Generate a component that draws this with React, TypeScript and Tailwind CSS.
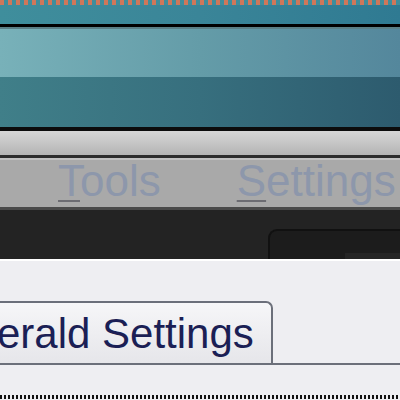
import React from 'react';

const font = { fontFamily: '"Liberation Sans", Arial, sans-serif' };

function MenuItem({ first, rest }: { first: string; rest: string }) {
  return (
    <span className="text-[44px] leading-[40px] text-[#8d97ab]">
      <span className="underline decoration-[#6c6c72] decoration-2 underline-offset-[4px]">{first}</span>
      {rest}
    </span>
  );
}

export default function App() {
  return (
    <div className="w-[400px] h-[400px] overflow-hidden flex flex-col bg-[#eeeef2]" style={font}>
      {/* title strip */}
      <div className="h-[5px] bg-[#3f8e9c] bg-[repeating-linear-gradient(90deg,#d0775a_0px,#d0775a_4px,transparent_4px,transparent_8px)]" />
      <div className="h-[19px] bg-gradient-to-r from-[#3f8e9c] via-[#3a8598] to-[#2f7a92]" />
      <div className="h-[3px] bg-black" />
      <div className="h-[2px] bg-[#5a7f86]" />
      <div className="h-[48px] bg-gradient-to-r from-[#78b1b9] via-[#649ca8] to-[#54879c]" />
      <div className="h-[50px] bg-gradient-to-r from-[#407f89] via-[#376f7e] to-[#2d5b6e]" />
      <div className="h-[4px] bg-[#0c0c0c]" />

      {/* toolbar chrome */}
      <div className="h-[24px] bg-gradient-to-b from-[#d6d6d6] via-[#c6c6c6] to-[#b4b4b4]" />
      <div className="h-[3px] bg-[#2c2c2c]" />
      <div className="h-[2px] bg-[#c0c0c0]" />

      {/* menu bar */}
      <div className="h-[47px] bg-[#a9a9a9] flex items-start pt-[1px] pl-[58px] gap-[76px] whitespace-nowrap">
        <MenuItem first="T" rest="ools" />
        <MenuItem first="S" rest="ettings" />
      </div>
      <div className="h-[3px] bg-[#4a4a4a]" />

      {/* dark area */}
      <div className="h-[49px] bg-[#232323] flex items-end pl-[268px]">
        <div className="flex-1 h-[30px] bg-[#1c1c1c] border-l-2 border-t-2 border-[#111111] rounded-tl-[9px] flex items-end pl-[75px]">
          <div className="w-full h-[6px] bg-[#252525]" />
        </div>
      </div>
      <div className="h-[2px] bg-white" />

      {/* dialog body */}
      <div className="flex-1 flex flex-col">
        <div className="h-[40px]" />
        <div className="flex items-end">
          <div className="w-[273px] h-[62px] border-t-2 border-r-2 border-[#6b6f7a] rounded-tr-[7px] bg-gradient-to-b from-[#f6f6f8] to-[#e6e6ea] overflow-hidden flex items-start pt-[10px]">
            <span className="ml-[-66px] whitespace-nowrap text-[42px] leading-none text-[#1b1f55]">
              Emerald Settings
            </span>
          </div>
          <div className="flex-1" />
        </div>
        <div className="h-[2px] bg-[#6b6f7a]" />
        <div className="flex-1" />
        <div className="h-[4px] mb-[1px] bg-[repeating-linear-gradient(90deg,#111111_0px,#111111_2px,transparent_2px,transparent_4px)]" />
      </div>
    </div>
  );
}
